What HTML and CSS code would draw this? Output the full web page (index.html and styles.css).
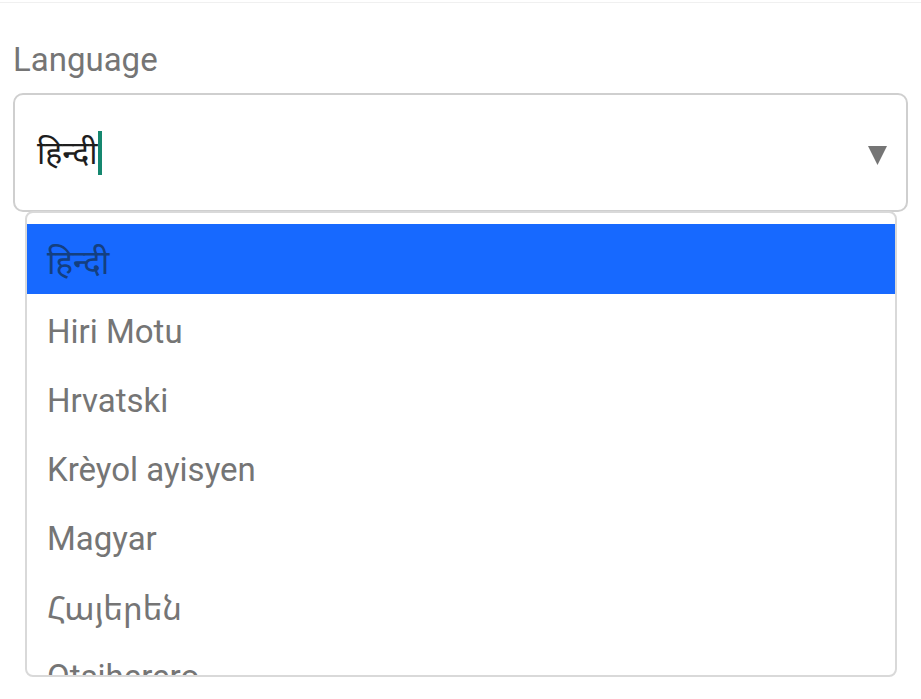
FILE: index.html
```html
<!DOCTYPE html>
<html lang="en">
<head>
<meta charset="utf-8">
<title>Language</title>
<link rel="stylesheet" href="styles.css">
</head>
<body>
<div class="topbar"></div>
<main class="page">
  <div class="field">
    <div class="label">Language</div>
    <div class="select">
      <div class="value"><span class="value-text">हिन्दी</span><span class="caret"></span></div>
      <svg class="arrow" width="19" height="19" viewBox="0 0 19 19" aria-hidden="true"><polygon points="0,0 19,0 9.5,19" fill="#757575"/></svg>
    </div>
    <ul class="menu">
      <li class="item item-active">हिन्दी</li>
      <li class="item">Hiri Motu</li>
      <li class="item">Hrvatski</li>
      <li class="item">Krèyol ayisyen</li>
      <li class="item">Magyar</li>
      <li class="item item-hy">Հայերեն</li>
      <li class="item">Otsiherero</li>
    </ul>
  </div>
</main>
</body>
</html>
```

FILE: styles.css
```css
html, body {
  margin: 0;
  padding: 0;
  background: #ffffff;
}

body {
  font-family: Roboto, "Noto Sans", "Noto Sans Devanagari", "DejaVu Sans", sans-serif;
  width: 921px;
  height: 699px;
  overflow: hidden;
}

.topbar {
  height: 2px;
  border-bottom: 1px solid #f0f0f0;
}

.page {
  padding: 38px 13px 0 13px;
}

.field {
  position: relative;
}

.label {
  font-size: 33px;
  line-height: 38px;
  color: #757575;
  margin-bottom: 14px;
}

.select {
  box-sizing: border-box;
  height: 119px;
  border: 2px solid #cfcfcf;
  border-radius: 10px;
  display: flex;
  align-items: center;
  justify-content: space-between;
  padding: 0 19px 0 22px;
}

.value {
  display: flex;
  align-items: center;
  font-size: 32px;
  color: #1e1e1e;
}

.value-text {
  line-height: 44px;
}

.caret {
  display: inline-block;
  width: 4px;
  height: 44px;
  background: #15876f;
  margin-left: 1px;
}

.arrow {
  display: block;
  margin-top: 5px;
}

.menu {
  position: absolute;
  left: 12px;
  top: 170px;
  width: 872px;
  height: 466px;
  box-sizing: border-box;
  margin: 0;
  padding: 11px 0 0 0;
  list-style: none;
  background: #ffffff;
  border: 2px solid #d9d9d9;
  border-radius: 8px;
  overflow: hidden;
}

.item {
  box-sizing: border-box;
  height: 69px;
  padding: 5px 0 0 20px;
  display: flex;
  align-items: center;
  font-size: 33px;
  color: #757575;
  white-space: nowrap;
}

.item-hy {
  font-family: "Noto Sans Armenian", "Noto Sans", "DejaVu Sans", sans-serif;
  font-size: 33px;
}

.item-active {
  height: 70px;
  background: #1769ff;
  color: #143f80;
}
```
